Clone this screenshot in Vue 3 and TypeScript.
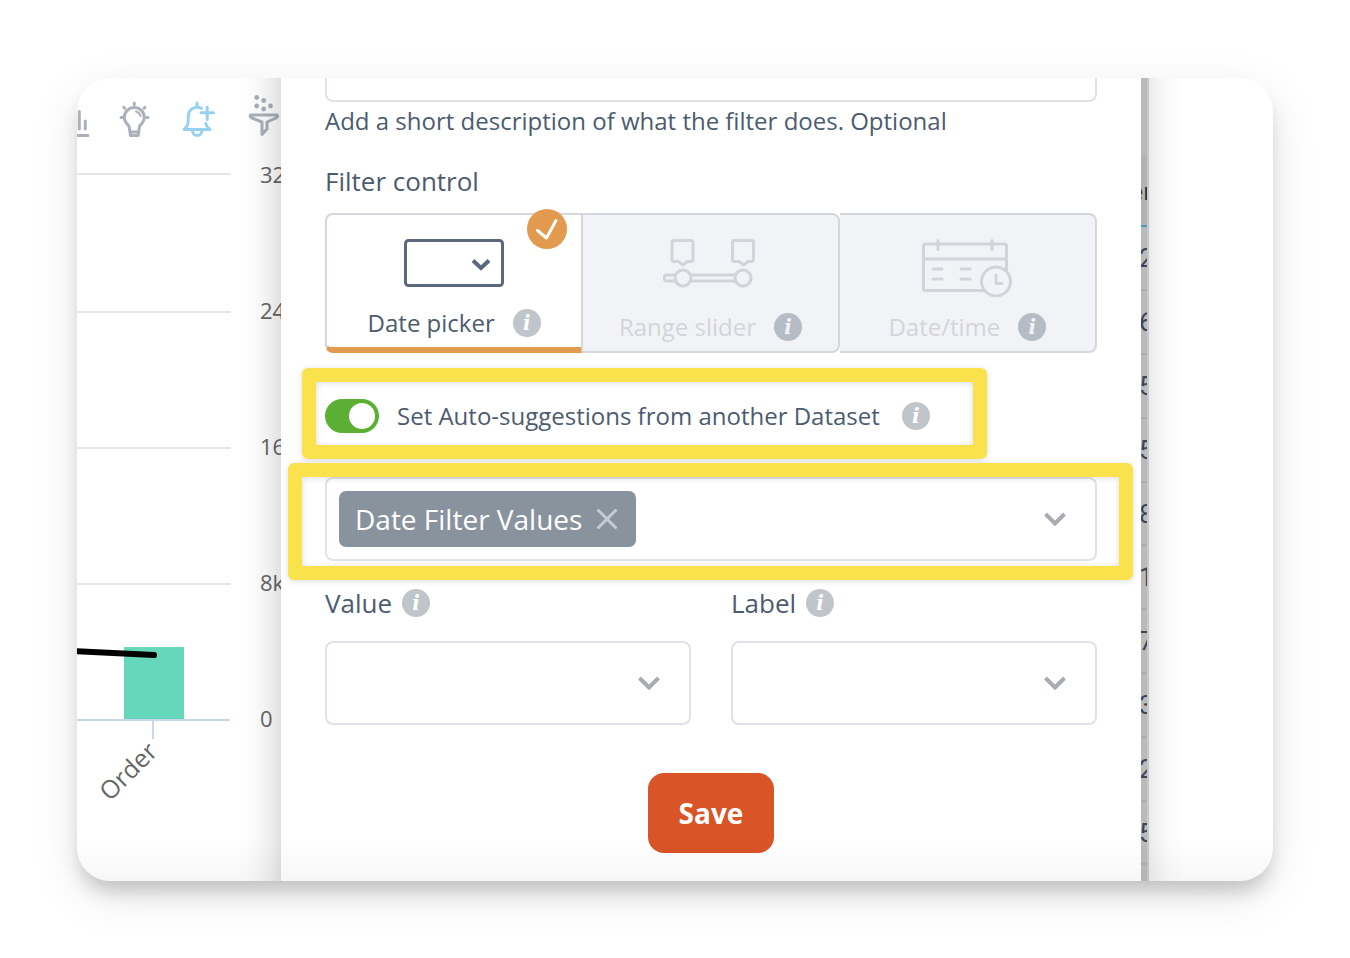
<script setup lang="ts">
import { ref } from 'vue'

interface AxisTick {
  label: string
  line: number
  baseline: number
}

const ticks: AxisTick[] = [
  { label: '32k', line: 35, baseline: 44 },
  { label: '24k', line: 173, baseline: 180 },
  { label: '16k', line: 309, baseline: 316 },
  { label: '8k', line: 445, baseline: 452 },
]

const rows: string[] = ['2', '6', '5', '5', '8', '1', '7', '3', '2', '5']

const control = ref<string>('picker')
const autoSuggest = ref<boolean>(true)
const datasets = ref<string[]>(['Date Filter Values'])
const description = ref<string>('')
const search = ref<string>('')

function removeDataset(name: string): void {
  datasets.value = datasets.value.filter((d) => d !== name)
}
</script>

<template>
  <main class="page">
    <div class="card">
      <section class="chart-pane" aria-label="Chart">
        <div class="toolbar">
          <button type="button" class="tool" aria-label="Chart type">
            <svg width="14" height="44" viewBox="0 0 14 44">
              <path d="M2.300 16.500v17.500M8.300 26v8M-2 40.500H11" />
            </svg>
          </button>
          <button type="button" class="tool" aria-label="Insights">
            <svg width="36" height="44" viewBox="0 0 36 44">
              <path d="M17.300 8v1.500M6.700 12.300l1 1M28 12.300l-1 1M4 22.500h1.500M29.500 22.500H31" />
              <path d="M13.500 40.500l-1.500-9.500c-2.500-2.500-4.700-4.800-4.700-8.500a10 10 0 0 1 20 0c0 3.700-2.200 6-4.700 8.500l-1.500 9.500zM13 37h8.600" />
              <path class="fine" d="M19 16.500c2.500.6 4 2.300 4.500 4.700" />
            </svg>
          </button>
          <button type="button" class="tool tool-active" aria-label="Add alert">
            <svg width="38" height="44" viewBox="0 0 38 44">
              <path d="M18 8v3.500M22.500 13.300c-6.500-3-13.200 1-13.200 8.200 0 8-.3 9-4.300 13h26c-2.500-1.800-3.700-3.500-4.300-6M13.500 35.500a4.700 5 0 0 0 9.400 0M28.200 12v12.500M22 17.700h12.500" />
            </svg>
          </button>
          <button type="button" class="tool" aria-label="Filter">
            <svg width="38" height="44" viewBox="0 0 38 44">
              <g class="dots">
                <circle cx="13.700" cy="2.500" r="2.400" />
                <circle cx="20.700" cy="5.500" r="2.400" />
                <circle cx="13.700" cy="11" r="2.400" />
                <circle cx="20.700" cy="14" r="2.400" />
                <circle cx="27.500" cy="11" r="2.400" />
              </g>
              <path d="M7.500 20h26.500c1.200 1.600.3 2.500-1 3l-9 4v7l-5 5.500v-12.500l-10-4c-1.500-.6-2.300-1.500-1.500-3z" />
            </svg>
          </button>
        </div>
        <svg class="chart" width="204" height="720" viewBox="0 0 204 720">
          <g v-for="t in ticks" :key="t.label">
            <line class="grid" x1="0" :y1="t.line" x2="153" :y2="t.line" />
            <text x="183" :y="t.baseline">{{ t.label }}</text>
          </g>
          <text x="183" y="588">0</text>
          <rect class="bar" x="47" y="508" width="60" height="73" />
          <path class="axis" d="M0 581H153M76 581v19" />
          <path class="trend" d="M-4 512L77 516" />
          <text class="category" text-anchor="end" transform="translate(82 614) rotate(-45)">Order</text>
        </svg>
      </section>

      <form class="panel" @submit.prevent>
        <textarea id="description" v-model="description" class="description" rows="1"></textarea>
        <label class="hint" for="description">Add a short description of what the filter does. Optional</label>

        <h2 class="heading">Filter control</h2>
        <div class="options" role="radiogroup" aria-label="Filter control">
          <div class="option selected">
            <input id="picker" v-model="control" type="radio" name="control" value="picker" />
            <label class="art" for="picker">
              <svg class="art-dark" width="100" height="48" viewBox="0 0 100 48">
                <rect x="1.500" y="1.500" width="97" height="45" rx="3" />
                <path class="thick" d="M69 21.500l8 7.500 8-7.500" />
              </svg>
            </label>
            <div class="caption">
              <label for="picker">Date picker</label>
              <button type="button" class="info" aria-label="About date picker">i</button>
            </div>
            <span class="badge">
              <svg width="40" height="40" viewBox="0 0 40 40"><path d="M10.500 21.500l9 7.500L29 11.500" /></svg>
            </span>
          </div>
          <div class="option disabled middle">
            <input id="slider" v-model="control" type="radio" name="control" value="slider" disabled />
            <label class="art" for="slider">
              <svg width="94" height="58" viewBox="0 0 94 58">
                <path d="M11 1.500h17q2 0 2 2v17q0 2-2 2h-3.500l-4.500 3.500-4.500-3.500h-4.500q-2 0-2-2v-17q0-2 2-2z" />
                <path d="M71.500 1.500h17q2 0 2 2v17q0 2-2 2h-3.500l-4.500 3.500-4.500-3.500h-4.500q-2 0-2-2v-17q0-2 2-2z" />
                <path d="M12 36H4a3 3 0 0 0 0 6h8M28 36h44M28 42h44" />
                <circle cx="20" cy="39" r="8" />
                <circle cx="80" cy="39" r="8" />
              </svg>
            </label>
            <div class="caption">
              <label for="slider">Range slider</label>
              <button type="button" class="info" aria-label="About range slider">i</button>
            </div>
          </div>
          <div class="option disabled last">
            <input id="datetime" v-model="control" type="radio" name="control" value="datetime" disabled />
            <label class="art" for="datetime">
              <svg width="90" height="58" viewBox="0 0 90 58">
                <rect x="1.500" y="5" width="83" height="46.500" rx="2" />
                <path d="M1.500 20h83M16 1.500v9M70 1.500v9M11 30h9M39 30h9M11 40h9M39 40h9" />
                <circle class="clock" cx="74" cy="42.500" r="14.500" />
                <path d="M74 36v8.500h6" />
              </svg>
            </label>
            <div class="caption">
              <label for="datetime">Date/time</label>
              <button type="button" class="info" aria-label="About date and time">i</button>
            </div>
          </div>
        </div>

        <div class="suggest">
          <input id="auto" v-model="autoSuggest" class="switch" type="checkbox" role="switch" />
          <label for="auto">Set Auto-suggestions from another Dataset</label>
          <button type="button" class="info" aria-label="About auto-suggestions">i</button>
          <span class="mark mark-suggest"></span>
        </div>

        <div class="dataset">
          <span v-for="d in datasets" :key="d" class="chip">
            {{ d }}
            <button type="button" :aria-label="'Remove ' + d" @click="removeDataset(d)">
              <svg width="20" height="20" viewBox="0 0 20 20"><path d="M1.500 1.500l17 17M18.500 1.500l-17 17" /></svg>
            </button>
          </span>
          <input v-model="search" type="text" aria-label="Dataset" />
          <svg class="chevron" width="22" height="14" viewBox="0 0 22 14"><path d="M1.500 2L11 11.500 20.500 2" /></svg>
          <span class="mark mark-dataset"></span>
        </div>

        <div class="fields">
          <div class="field">
            <div class="field-name">
              <label for="value">Value</label>
              <button type="button" class="info" aria-label="About value">i</button>
            </div>
            <div class="select">
              <select id="value"><option value=""></option></select>
              <svg class="chevron" width="22" height="14" viewBox="0 0 22 14"><path d="M1.500 2L11 11.500 20.500 2" /></svg>
            </div>
          </div>
          <div class="field">
            <div class="field-name">
              <label for="label">Label</label>
              <button type="button" class="info" aria-label="About label">i</button>
            </div>
            <div class="select">
              <select id="label"><option value=""></option></select>
              <svg class="chevron" width="22" height="14" viewBox="0 0 22 14"><path d="M1.500 2L11 11.500 20.500 2" /></svg>
            </div>
          </div>
        </div>

        <button type="submit" class="save">Save</button>
      </form>

      <div class="sliver">
        <table>
          <thead>
            <tr><th>er</th></tr>
          </thead>
          <tbody>
            <tr v-for="(r, i) in rows" :key="i"><td>{{ r }}</td></tr>
          </tbody>
        </table>
      </div>
      <div class="blank"></div>
    </div>
  </main>
</template>

<style>
body {
  margin: 0;
  background: #fff;
}
</style>

<style scoped>
.page {
  padding: 78px 77px 77px;
  font-family: "Open Sans", "Noto Sans", sans-serif;
  font-size: 24px;
  color: #4d5b70;
}
.page *,
.page *::before {
  box-sizing: border-box;
}
button,
input,
select,
textarea {
  font: inherit;
  color: inherit;
  margin: 0;
  padding: 0;
  border: 0;
  background: none;
}
svg {
  display: block;
  fill: none;
  stroke-linecap: round;
  stroke-linejoin: round;
}
.card {
  position: relative;
  display: flex;
  border-radius: 33px;
  overflow: hidden;
  background: #fff;
  box-shadow: 0 14px 18px -4px rgba(0, 0, 0, 0.18), 0 14px 48px rgba(0, 0, 0, 0.1);
}
.card::after {
  content: "";
  position: absolute;
  inset: auto 0 0;
  height: 44px;
  z-index: 3;
  background: linear-gradient(rgba(0, 0, 0, 0), rgba(0, 0, 0, 0.03));
  pointer-events: none;
}
.chart-pane {
  flex: 0 0 204px;
  overflow: hidden;
}
.toolbar {
  display: flex;
  gap: 26px;
  padding-top: 17px;
}
.tool {
  stroke: #abb1bb;
  stroke-width: 3;
}
.tool-active {
  stroke: #96d1f2;
  stroke-width: 3;
}
.fine {
  stroke-width: 2;
}
.dots {
  fill: #a9b0bb;
  stroke: none;
}
.chart text {
  fill: #666;
  font-size: 22px;
}
.chart .category {
  font-size: 25px;
}
.grid {
  stroke: #e6e6e6;
  stroke-width: 2;
}
.axis {
  stroke: #ccd6eb;
  stroke-width: 2;
  stroke-linecap: butt;
}
.bar {
  fill: #67d7bc;
}
.trend {
  stroke: #000;
  stroke-width: 6;
}
.panel {
  position: relative;
  z-index: 1;
  flex: 1;
  display: flex;
  flex-direction: column;
  padding: 0 44px 28px;
  background: #fff;
}
.panel::before {
  content: "";
  position: absolute;
  inset: -60px 0;
  z-index: -1;
  background: #fff;
  box-shadow: 0 0 38px rgba(0, 0, 0, 0.24);
}
.description {
  height: 24px;
  resize: none;
  overflow: hidden;
  border: 2px solid #dfe2e8;
  border-top: 0;
  border-radius: 0 0 8px 8px;
}
.hint {
  line-height: 38px;
}
.heading {
  margin: 22px 0 13px;
  font-size: 26px;
  font-weight: 400;
  line-height: 38px;
}
.options {
  display: grid;
  grid-template-columns: repeat(3, 1fr);
}
.option {
  position: relative;
  display: flex;
  flex-direction: column;
  align-items: center;
  height: 140px;
  padding-top: 24px;
  border: 2px solid #d4d7db;
}
.option input {
  position: absolute;
  opacity: 0;
}
.selected {
  border-right-width: 1px;
  border-bottom: 6px solid #e29b4e;
  border-radius: 8px 0 0 8px;
}
.disabled {
  background: #f2f3f7;
  color: #d2d5da;
}
.middle {
  border-left-width: 1px;
  border-radius: 0 8px 8px 0;
}
.last {
  border-left: 0;
  border-radius: 0 8px 8px 0;
}
.art {
  height: 58px;
  margin-bottom: 16px;
  stroke: #cfd5db;
  stroke-width: 3;
}
.selected .art {
  height: 54px;
}
.art-dark {
  stroke: #5b687d;
  stroke-width: 3;
}
.thick {
  stroke-width: 4;
  stroke-linecap: butt;
  stroke-linejoin: miter;
}
.clock {
  fill: #f2f3f7;
}
.caption {
  display: flex;
  align-items: center;
  gap: 18px;
  line-height: 28px;
}
.info {
  width: 28px;
  height: 28px;
  border-radius: 50%;
  background: #c0c4cb;
  color: #fff;
  font: italic 700 20px/28px "DejaVu Serif", serif;
  text-align: center;
}
.disabled .info {
  background: #b6bcc5;
  color: #f2f3f7;
}
.badge {
  position: absolute;
  top: -6px;
  right: 14px;
  border-radius: 50%;
  background: #e29b4e;
  stroke: #fff;
  stroke-width: 3;
}
.suggest {
  position: relative;
  display: flex;
  align-items: center;
  width: fit-content;
  margin-top: 46px;
  line-height: 34px;
}
.suggest label {
  margin: 0 22px 0 18px;
}
.switch {
  appearance: none;
  display: flex;
  align-items: center;
  width: 54px;
  height: 34px;
  padding: 4px;
  border-radius: 17px;
  background: #a9b0bb;
}
.switch::before {
  content: "";
  width: 26px;
  height: 26px;
  border-radius: 50%;
  background: #fff;
}
.switch:checked {
  justify-content: flex-end;
  background: #5bb034;
}
.mark {
  position: absolute;
  border: 14px solid #fae24c;
  border-radius: 6px;
  box-shadow: 0 1px 6px rgba(0, 0, 0, 0.14), inset 0 1px 6px rgba(0, 0, 0, 0.14);
  pointer-events: none;
}
.mark-suggest {
  inset: -31px -57px -26px -23px;
}
.mark-dataset {
  inset: -16px -38px -21px -39px;
}
.dataset {
  position: relative;
  display: flex;
  align-items: center;
  height: 84px;
  margin-top: 44px;
  padding: 0 29px 0 12px;
  border: 2px solid #dfe2e8;
  border-radius: 8px;
}
.dataset input {
  flex: 1;
  min-width: 0;
  align-self: stretch;
  outline: 0;
}
.chip {
  display: flex;
  align-items: center;
  gap: 15px;
  height: 56px;
  padding: 0 19px 0 16px;
  border-radius: 7px;
  background: #89939e;
  color: #fff;
  font-size: 28px;
}
.chip button {
  stroke: #c7ccd1;
  stroke-width: 3;
}
.chevron {
  stroke: #a8acb2;
  stroke-width: 4;
  stroke-linecap: butt;
  stroke-linejoin: miter;
}
.fields {
  display: grid;
  grid-template-columns: 1fr 1fr;
  gap: 40px;
  margin-top: 23px;
}
.field-name {
  display: flex;
  align-items: center;
  gap: 10px;
  margin-bottom: 19px;
  font-size: 26px;
  line-height: 38px;
}
.select {
  display: grid;
  align-items: center;
}
.select > * {
  grid-area: 1 / 1;
}
.select select {
  appearance: none;
  width: 100%;
  height: 84px;
  border: 2px solid #dfe2e8;
  border-radius: 8px;
}
.select .chevron {
  justify-self: end;
  margin-right: 31px;
  pointer-events: none;
}
.save {
  align-self: center;
  height: 80px;
  margin-top: 48px;
  padding: 0 31px;
  border-radius: 16px;
  background: #d95427;
  color: #fff;
  font-size: 28px;
  font-weight: 700;
}
.sliver {
  z-index: 2;
  flex: 0 0 8px;
  height: 803px;
  overflow: hidden;
  border-right: 2px solid #c5c8cc;
  background: #bababa;
}
.sliver table {
  width: 24px;
  margin-top: 77px;
  border-collapse: collapse;
  color: #3d4556;
}
.sliver th {
  height: 71px;
  padding: 0;
  border-bottom: 2px solid #4f9cb5;
  background: #b0b2b4;
  color: #333;
  font-size: 24px;
  text-align: left;
  text-indent: -12px;
}
.sliver td {
  height: 64px;
  padding: 0;
  border-bottom: 2px solid #adadad;
  font: 26px/34px Roboto, "Open Sans", sans-serif;
  text-indent: -2px;
}
.sliver tr:nth-child(5n) td {
  height: 63px;
}
.blank {
  flex: 0 0 124px;
}
</style>
